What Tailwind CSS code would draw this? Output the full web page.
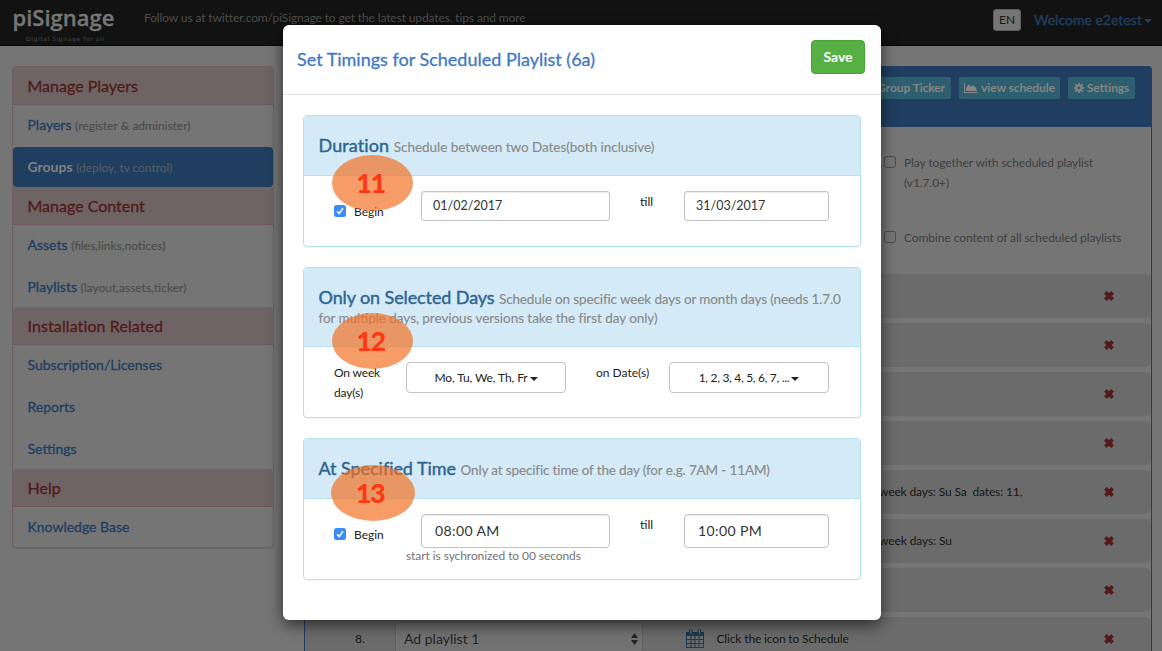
<!DOCTYPE html>
<html lang="en">
<head>
<meta charset="utf-8">
<title>piSignage</title>
<script src="https://cdn.jsdelivr.net/npm/@tailwindcss/browser@4"></script>
</head>
<body class="relative h-[651px] w-[1162px] overflow-hidden bg-[#757575] font-['Lato',sans-serif] text-[12px] text-[#161616]">
<svg class="hidden">
  <symbol id="times" viewBox="0 0 10 10"><path d="M2 2 8 8M8 2 2 8" stroke="#541a1a" stroke-width="3.1" fill="none"/></symbol>
  <symbol id="check" viewBox="0 0 12 12"><rect width="12" height="12" rx="2.5" fill="#3b8bf8"/><path d="M3 6.3 5.2 8.6 9 3.2" stroke="#fff" stroke-width="1.6" fill="none"/></symbol>
</svg>

<header class="flex h-[46px] border-b border-[#040404] bg-[#121212]">
  <div class="w-[144px] pl-[12px] pt-[4px]">
    <svg width="112" height="40" viewBox="0 0 112 40" fill="#767676">
      <text x="0.500" y="22" font-family="Open Sans" font-size="21.500" font-weight="600" stroke="#767676" stroke-width=".3" textLength="102" lengthAdjust="spacingAndGlyphs">piSignage</text>
      <text x="14" y="37" font-family="DejaVu Sans" font-size="6" textLength="78" fill="#4a4a4a">Digital Signage for all</text>
    </svg>
  </div>
  <p class="flex-1 whitespace-nowrap pt-[9px] text-[12px] leading-[17px] tracking-[-0.12px] text-[#4d4d4d]">Follow us at twitter.com/piSignage to get the latest updates, tips and more</p>
  <div class="flex pt-[9px]">
    <span class="flex h-[22px] w-[28px] items-center justify-center rounded-[3px] border border-[#5e5e5e] bg-[#757575] text-[12px]">EN</span>
    <span class="ml-[13px] w-[128px] whitespace-nowrap text-[14px] leading-[22px] text-[#203e60] [-webkit-text-stroke:0.4px_#203e60]">Welcome e2etest<i class="ml-[2px] inline-block border-x-4 border-t-4 border-x-transparent border-t-[#203e60] align-middle"></i></span>
  </div>
</header>

<div class="flex h-[605px] overflow-hidden pl-[12px] pt-[20px]">
  <nav class="h-[482px] w-[262px] shrink-0 rounded border border-[#705f61] text-[14px] leading-[40px] text-[#203e60] shadow-[0_1px_1px_rgba(0,0,0,0.1)]">
    <h3 class="h-[38px] border-b border-[#6d5759] bg-[#6e6463] pl-[14.500px] text-[16px] leading-[37px] text-[#501a1a] [-webkit-text-stroke:0.3px_#501a1a]">Manage Players</h3>
    <div class="mb-[2px] h-[40px] pl-[14.500px]"><b class="font-normal [-webkit-text-stroke:0.3px_#203e60]">Players</b> <small class="text-[12px] text-[#4c4c4c] [-webkit-text-stroke:0.15px_#4c4c4c]">(register &amp; administer)</small></div>
    <div class="h-[40px] rounded bg-[#203e60] pl-[14.500px]"><b class="text-[#808080]">Groups</b> <small class="text-[12px] tracking-[-0.05px] text-[#5a5f63]">(deploy, tv control)</small></div>
    <h3 class="h-[38px] border-b border-[#6d5759] bg-[#6e6463] pl-[14.500px] text-[16px] leading-[37px] text-[#501a1a] [-webkit-text-stroke:0.3px_#501a1a]">Manage Content</h3>
    <div class="mb-[2px] h-[40px] pl-[14.500px]"><b class="font-normal [-webkit-text-stroke:0.3px_#203e60]">Assets</b> <small class="text-[12px] text-[#4c4c4c] [-webkit-text-stroke:0.15px_#4c4c4c]">(files,links,notices)</small></div>
    <div class="h-[40px] pl-[14.500px]"><b class="font-normal [-webkit-text-stroke:0.3px_#203e60]">Playlists</b> <small class="text-[12px] text-[#4c4c4c] [-webkit-text-stroke:0.15px_#4c4c4c]">(layout,assets,ticker)</small></div>
    <h3 class="h-[38px] rounded-t border-b border-[#6d5759] bg-[#6e6463] pl-[14.500px] text-[16px] leading-[37px] tracking-[0.1px] text-[#501a1a] [-webkit-text-stroke:0.3px_#501a1a]">Installation Related</h3>
    <div class="mb-[2px] h-[40px] pl-[14.500px] [-webkit-text-stroke:0.3px_#203e60]">Subscription/Licenses</div>
    <div class="mb-[2px] h-[40px] pl-[14.500px] [-webkit-text-stroke:0.3px_#203e60]">Reports</div>
    <div class="h-[40px] pl-[14.500px] [-webkit-text-stroke:0.3px_#203e60]">Settings</div>
    <h3 class="h-[38px] rounded-t border-b border-[#6d5759] bg-[#6e6463] pl-[14.500px] text-[16px] leading-[37px] text-[#501a1a] [-webkit-text-stroke:0.3px_#501a1a]">Help</h3>
    <div class="h-[40px] pl-[14.500px] [-webkit-text-stroke:0.3px_#203e60]">Knowledge Base</div>
  </nav>

  <main class="ml-[30px] h-[620px] w-[848px] shrink-0 rounded-t border-x border-[#203e60]">
    <div class="flex h-[61px] justify-end gap-[8px] rounded-t-[3px] bg-[#203e60] pr-[16px] pt-[11px] text-[12px] font-bold tracking-[-0.1px] text-[#858585]">
      <span class="flex h-[22px] items-center whitespace-nowrap rounded-[2px] bg-[#2d5f71] px-[6px]">Group Ticker</span>
      <span class="flex h-[22px] w-[101px] items-center justify-center gap-[3px] whitespace-nowrap rounded-[2px] bg-[#2d5f71]">
        <svg width="14" height="12" viewBox="0 0 14 12" fill="#858585"><path d="M0 1h1v9h12.500v1H0zM2 9V6l2.500-3.500L6.800 4.700 9 3l1.500 2 1-.5L13 9z"/></svg>view schedule</span>
      <span class="flex h-[22px] w-[67px] items-center justify-center gap-[3px] whitespace-nowrap rounded-[2px] bg-[#2d5f71]">
        <svg width="10" height="10" viewBox="0 0 12 12" fill="none" stroke="#858585"><circle cx="6" cy="6" r="3" stroke-width="2.400"/><path d="M6 0v2M6 10v2M0 6h2M10 6h2M1.700 1.700 3.200 3.200M8.800 8.800l1.500 1.500M1.700 10.300l1.500-1.500M8.800 3.200l1.500-1.500" stroke-width="2.200"/></svg>Settings</span>
    </div>
    <div class="flex h-[147px] flex-col pl-[579px] pt-[26px] leading-[20px] tracking-[-0.08px] text-[#3f3f3f]">
      <div class="flex h-[75px] gap-[8px]"><i class="mt-[3px] h-[12px] w-[12px] shrink-0 rounded-[3px] border border-[#4c4c4c]"></i><p class="whitespace-nowrap">Play together with scheduled playlist<br>(v1.7.0+)</p></div>
      <div class="flex gap-[8px]"><i class="mt-[3px] h-[12px] w-[12px] shrink-0 rounded-[3px] border border-[#4c4c4c]"></i><p class="whitespace-nowrap">Combine content of all scheduled playlists</p></div>
    </div>
    <div class="flex flex-col gap-[5px]">
      <div class="flex h-[44px] items-center justify-end rounded-md bg-[#6b6b6b] pr-[36px]"><svg class="h-[12px] w-[12px]"><use href="#times"/></svg></div>
      <div class="flex h-[44px] items-center justify-end rounded-md bg-[#6b6b6b] pr-[36px]"><svg class="h-[12px] w-[12px]"><use href="#times"/></svg></div>
      <div class="flex h-[44px] items-center justify-end rounded-md bg-[#6b6b6b] pr-[36px]"><svg class="h-[12px] w-[12px]"><use href="#times"/></svg></div>
      <div class="flex h-[44px] items-center justify-end rounded-md bg-[#6b6b6b] pr-[36px]"><svg class="h-[12px] w-[12px]"><use href="#times"/></svg></div>
      <div class="flex h-[44px] items-center justify-between rounded-md bg-[#6b6b6b] pl-[574px] pr-[36px] tracking-[-0.13px]"><span class="whitespace-pre">week days: Su Sa  dates: 11,</span><svg class="h-[12px] w-[12px]"><use href="#times"/></svg></div>
      <div class="flex h-[44px] items-center justify-between rounded-md bg-[#6b6b6b] pl-[574px] pr-[36px] tracking-[-0.1px]"><span>week days: Su</span><svg class="h-[12px] w-[12px]"><use href="#times"/></svg></div>
      <div class="flex h-[44px] items-center justify-end rounded-md bg-[#6b6b6b] pr-[36px]"><svg class="h-[12px] w-[12px]"><use href="#times"/></svg></div>
      <div class="flex h-[44px] items-center rounded-md bg-[#6b6b6b] pr-[36px]">
        <span class="w-[90px] pl-[50px]">8.</span>
        <span class="flex h-[34px] w-[248px] items-center justify-between rounded border border-[#626262] bg-[#727272] pb-[2px] pl-[8px] pr-[4px] text-[14px] text-[#242424]">Ad playlist 1
          <svg class="mt-[2px]" width="7" height="12" viewBox="0 0 7 12" fill="#242424"><path d="M0 5 3.500 0 7 5zM0 7h7L3.500 12z"/></svg></span>
        <svg class="ml-[43px]" width="18" height="20" viewBox="0 0 18 20"><path d="M0 3h18v16H0z" fill="#1a3b52"/><path d="M1 7h16v11H1z" fill="#6b6b6b"/><path d="M5 7v11M9 7v11M13 7v11M1 10.500h16M1 14.500h16" stroke="#1a3b52"/><rect x="3.500" y=".5" width="2.500" height="4.500" rx="1" fill="#6b6b6b" stroke="#1a3b52"/><rect x="12" y=".5" width="2.500" height="4.500" rx="1" fill="#6b6b6b" stroke="#1a3b52"/></svg>
        <span class="ml-[12.500px] flex-1 tracking-[-0.15px]">Click the icon to Schedule</span>
        <svg class="h-[12px] w-[12px]"><use href="#times"/></svg>
      </div>
    </div>
  </main>
</div>

<section class="absolute left-[283px] top-[25px] h-[595px] w-[598px] rounded-md bg-white text-[12px] text-[#222] shadow-[0_5px_15px_rgba(0,0,0,0.6)]">
  <div class="flex h-[70px] justify-between border-b border-[#e0e0e0] pl-[14px] pr-[16px] pt-[15px]">
    <h2 class="text-[18px] leading-[38px] text-[#3f78c4] [-webkit-text-stroke:0.3px_#3f78c4]">Set Timings for Scheduled Playlist (6a)</h2>
    <button class="h-[34px] w-[54px] rounded border border-[#4aa237] bg-[#57b044] pb-[2px] text-[14px] font-bold text-white">Save</button>
  </div>
  <div class="flex flex-col gap-[20px] px-[20px] pt-[20px]">
    <article class="h-[132px] rounded border border-[#b5e4ee] shadow-[0_1px_1px_rgba(0,0,0,0.05)]">
      <h3 class="h-[60px] rounded-t-[3px] border-b border-[#b5e4ee] bg-[#d4eaf7] pl-[14.500px] pt-[19.500px] text-[18px] leading-[19px] tracking-[0.1px] text-[#2d6490] [-webkit-text-stroke:0.4px_#2d6490]">Duration <small class="text-[13.500px] leading-none tracking-[-0.04px] text-[#8a8a8a] [-webkit-text-stroke:0.15px_#8a8a8a]">Schedule between two Dates(both inclusive)</small></h3>
      <div class="flex pl-[30px] pt-[15px]">
        <label class="flex h-[20px] w-[87px] items-center gap-[8px] pt-[20px]"><svg class="h-[12px] w-[12px]"><use href="#check"/></svg><span class="pt-px">Begin</span></label>
        <span class="flex h-[30px] w-[189px] items-center rounded-[3px] border border-[#c2c2c2] pl-[11px] pt-px text-[12.500px] text-[#333] shadow-[inset_0_1px_1px_rgba(0,0,0,0.075)]">01/02/2017</span>
        <span class="w-[74px] pl-[30px] leading-[21px]">till</span>
        <span class="flex h-[30px] w-[145px] items-center rounded-[3px] border border-[#c2c2c2] pl-[11px] pt-px text-[12.500px] text-[#333] shadow-[inset_0_1px_1px_rgba(0,0,0,0.075)]">31/03/2017</span>
      </div>
    </article>
    <article class="h-[151px] rounded border border-[#b5e4ee] shadow-[0_1px_1px_rgba(0,0,0,0.05)]">
      <h3 class="h-[79px] rounded-t-[3px] border-b border-[#b5e4ee] bg-[#d4eaf7] pl-[14.500px] pt-[19.500px] text-[18px] leading-[19px] tracking-[-0.1px] text-[#2d6490] [-webkit-text-stroke:0.4px_#2d6490]">Only on Selected Days <small class="text-[13.500px] leading-none tracking-[-0.13px] text-[#8a8a8a] [-webkit-text-stroke:0.15px_#8a8a8a]">Schedule on specific week days or month days (needs 1.7.0<br><span class="tracking-[-0.05px]">for multiple days, previous versions take the first day only)</span></small></h3>
      <div class="flex pl-[30px] pt-[15px] leading-[20px]">
        <span class="w-[72px] pt-px tracking-[-0.15px]">On week<br>day(s)</span>
        <span class="flex h-[31px] w-[160px] items-center justify-center gap-[2px] rounded border border-[#c2c2c2] tracking-[-0.1px]">Mo, Tu, We, Th, Fr<i class="mt-[2px] border-x-4 border-t-4 border-x-transparent border-t-[#222]"></i></span>
        <span class="w-[103px] pl-[30px] pt-px">on Date(s)</span>
        <span class="flex h-[31px] w-[160px] items-center justify-center gap-[2px] rounded border border-[#c2c2c2] tracking-[-0.3px]">1, 2, 3, 4, 5, 6, 7, ...<i class="mt-[2px] border-x-4 border-t-4 border-x-transparent border-t-[#222]"></i></span>
      </div>
    </article>
    <article class="h-[142px] rounded border border-[#b5e4ee] shadow-[0_1px_1px_rgba(0,0,0,0.05)]">
      <h3 class="h-[60px] rounded-t-[3px] border-b border-[#b5e4ee] bg-[#d4eaf7] pl-[14.500px] pt-[19.500px] text-[18px] leading-[19px] tracking-[-0.05px] text-[#2d6490] [-webkit-text-stroke:0.4px_#2d6490]">At Specified Time <small class="text-[13.500px] leading-none tracking-[-0.14px] text-[#8a8a8a] [-webkit-text-stroke:0.15px_#8a8a8a]">Only at specific time of the day (for e.g. 7AM - 11AM)</small></h3>
      <div class="flex pl-[30px] pt-[15px]">
        <label class="flex h-[20px] w-[87px] items-center gap-[8px] pt-[20px]"><svg class="h-[12px] w-[12px]"><use href="#check"/></svg><span class="pt-px">Begin</span></label>
        <span class="flex h-[34px] w-[189px] items-center rounded border border-[#c2c2c2] pb-[2px] pl-[13px] text-[14px] tracking-[0.4px] text-[#333] shadow-[inset_0_1px_1px_rgba(0,0,0,0.075)]">08:00 AM</span>
        <span class="w-[74px] pl-[30px] leading-[21px]">till</span>
        <span class="flex h-[34px] w-[145px] items-center rounded border border-[#c2c2c2] pb-[2px] pl-[13px] text-[14px] tracking-[0.4px] text-[#333] shadow-[inset_0_1px_1px_rgba(0,0,0,0.075)]">10:00 PM</span>
      </div>
      <p class="pl-[102px] leading-[16px] tracking-[-0.08px] text-[#737373]">start is sychronized to 00 seconds</p>
    </article>
  </div>
</section>

<span class="absolute left-[332px] top-[155px] flex h-[56px] w-[81px] items-center justify-center rounded-[50%] bg-[#f27226]/70 pr-[4px] text-[27px] font-black tracking-[-1.500px] text-[#ff3812]">11</span>
<span class="absolute left-[332px] top-[313px] flex h-[56px] w-[81px] items-center justify-center rounded-[50%] bg-[#f27226]/70 pr-[4px] text-[27px] font-black tracking-[-1.500px] text-[#ff3812]">12</span>
<span class="absolute left-[331px] top-[465px] flex h-[56px] w-[84px] items-center justify-center rounded-[50%] bg-[#f27226]/70 pr-[6px] text-[27px] font-black tracking-[-1.500px] text-[#ff3812]">13</span>
</body>
</html>
